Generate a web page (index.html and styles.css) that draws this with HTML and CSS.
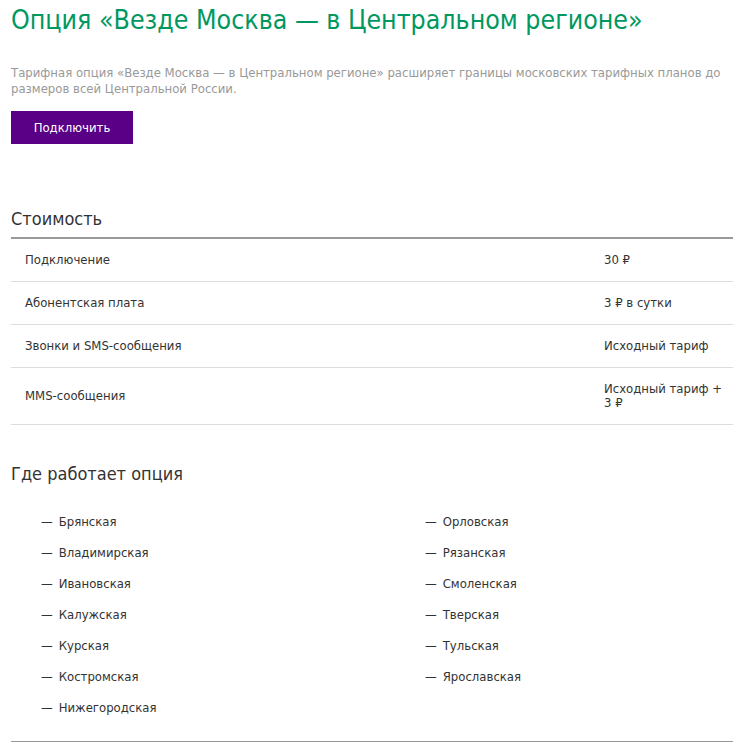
FILE: index.html
```html
<!DOCTYPE html>
<html lang="ru">
<head>
  <meta charset="UTF-8" />
  <title>Опция «Везде Москва — в Центральном регионе»</title>
  <link rel="stylesheet" href="styles.css">
</head>
<body>
  <div class="page">
    <h1 class="title">Опция «Везде Москва — в Центральном регионе»</h1>

    <p class="lead">Тарифная опция «Везде Москва — в Центральном регионе» расширяет границы московских тарифных планов до размеров всей Центральной России.</p>

    <button class="btn">Подключить</button>

    <h2 class="section-title">Стоимость</h2>
    <table class="price">
      <tr>
        <td>Подключение</td>
        <td class="val">30 ₽</td>
      </tr>
      <tr>
        <td>Абонентская плата</td>
        <td class="val">3 ₽ в сутки</td>
      </tr>
      <tr>
        <td>Звонки и SMS-сообщения</td>
        <td class="val">Исходный тариф</td>
      </tr>
      <tr>
        <td>MMS-сообщения</td>
        <td class="val">Исходный тариф + 3 ₽</td>
      </tr>
    </table>

    <h2 class="section-title where">Где работает опция</h2>
    <div class="regions">
      <ul>
        <li>Брянская</li>
        <li>Владимирская</li>
        <li>Ивановская</li>
        <li>Калужская</li>
        <li>Курская</li>
        <li>Костромская</li>
        <li>Нижегородская</li>
      </ul>
      <ul>
        <li>Орловская</li>
        <li>Рязанская</li>
        <li>Смоленская</li>
        <li>Тверская</li>
        <li>Тульская</li>
        <li>Ярославская</li>
      </ul>
    </div>
  </div>
</body>
</html>
```

FILE: styles.css
```css
body {
  margin: 0;
  font-family: "Liberation Sans Narrow", "DejaVu Sans Condensed", "Liberation Sans", sans-serif;
  color: #333;
  background: #fff;
}

.page {
  width: 722px;
  margin-left: 11px;
}

.title {
  margin: 0;
  padding-top: 4px;
  font-size: 26.5px;
  font-weight: normal;
  line-height: 32px;
  color: #00985f;
}

.lead {
  margin: 29px 0 0;
  font-size: 13px;
  line-height: 16px;
  color: #999;
}

.btn {
  display: block;
  margin-top: 14px;
  width: 122px;
  height: 33px;
  border: none;
  background: #5a0087;
  color: white;
  font-family: inherit;
  font-size: 13px;
  cursor: pointer;
}

.section-title {
  margin: 64px 0 0;
  padding-bottom: 7px;
  font-size: 18px;
  font-weight: normal;
  line-height: 22px;
  color: #333;
}

.price {
  width: 100%;
  border-collapse: collapse;
  border-top: 2px solid #999;
  font-size: 13px;
}

.price td {
  height: 42px;
  padding: 0 14px;
  border-bottom: 1px solid #ddd;
  line-height: 14px;
}

.price tr:last-child td {
  height: 56px;
}

.price .val {
  width: 119px;
  padding: 0 10px 0 0;
}

.where {
  margin-top: 38px;
  font-size: 18px;
  padding-bottom: 0;
}

.regions {
  display: flex;
  padding: 21px 0 18px 30px;
  border-bottom: 1px solid #999;
}

.regions ul {
  flex: 0 0 384px;
  margin: 0;
  padding: 0;
  list-style: none;
}

.regions ul + ul {
  flex: 1 1 auto;
}

.regions li {
  font-size: 13px;
  line-height: 31px;
}

.regions li::before {
  content: "—";
  margin-right: 6px;
}
```
